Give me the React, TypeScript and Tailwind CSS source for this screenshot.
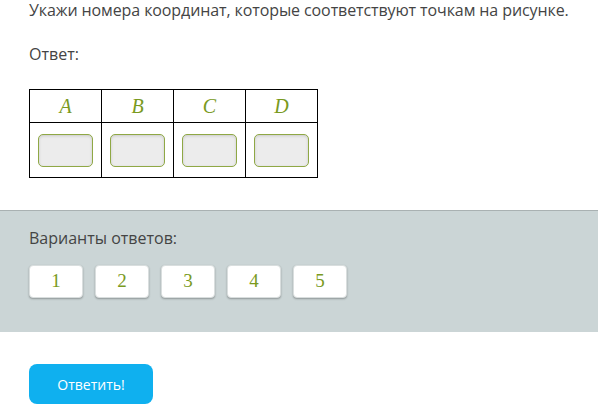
const cols = ["A", "B", "C", "D"];
const options = ["1", "2", "3", "4", "5"];

export default function App() {
  return (
    <div className="w-[598px] h-[420px] bg-white text-[#444] font-['Open_Sans',sans-serif] overflow-hidden">
      <div className="px-[29px]">
        <p className="text-[16px] leading-5 tracking-[-0.1px]">Укажи номера координат, которые соответствуют точкам на рисунке.</p>
        <p className="text-[16px] leading-5 mt-[24px]">Ответ:</p>
        <table className="mt-[25px] border-collapse">
          <thead>
            <tr>
              {cols.map((c) => (
                <th
                  key={c}
                  className="w-[72px] h-[33px] border border-black p-0 text-center font-normal italic text-[20px] text-[#7a9a1e] font-['Liberation_Serif',serif]"
                >
                  {c}
                </th>
              ))}
            </tr>
          </thead>
          <tbody>
            <tr>
              {cols.map((c) => (
                <td key={c} className="h-[55px] border border-black p-0">
                  <div className="mx-auto w-[55px] h-[33px] rounded-[5px] border border-[#8fa845] bg-[#ececec] shadow-[inset_0_1px_3px_rgba(0,0,0,0.15)]" />
                </td>
              ))}
            </tr>
          </tbody>
        </table>
      </div>

      <div className="mt-[32px] h-[122px] bg-[#cbd5d6] border-t border-[#a9b1b2] px-[29px] pt-[17px]">
        <p className="text-[16px] leading-5 text-[#444]">Варианты ответов:</p>
        <div className="flex gap-3 mt-[17px]">
          {options.map((o) => (
            <div
              key={o}
              className="w-[54px] h-[33px] bg-white rounded-[4px] border border-[#d9dede] shadow-[0_1px_2px_rgba(0,0,0,0.3)] flex items-center justify-center text-[19px] text-[#7a9a1e] font-['Liberation_Serif',serif]"
            >
              {o}
            </div>
          ))}
        </div>
      </div>

      <div className="px-[29px] pt-[32px]">
        <button className="w-[124px] h-[40px] rounded-[8px] bg-[#0fb0ef] text-white text-[14px] font-['Open_Sans',sans-serif]">
          Ответить!
        </button>
      </div>
    </div>
  );
}
